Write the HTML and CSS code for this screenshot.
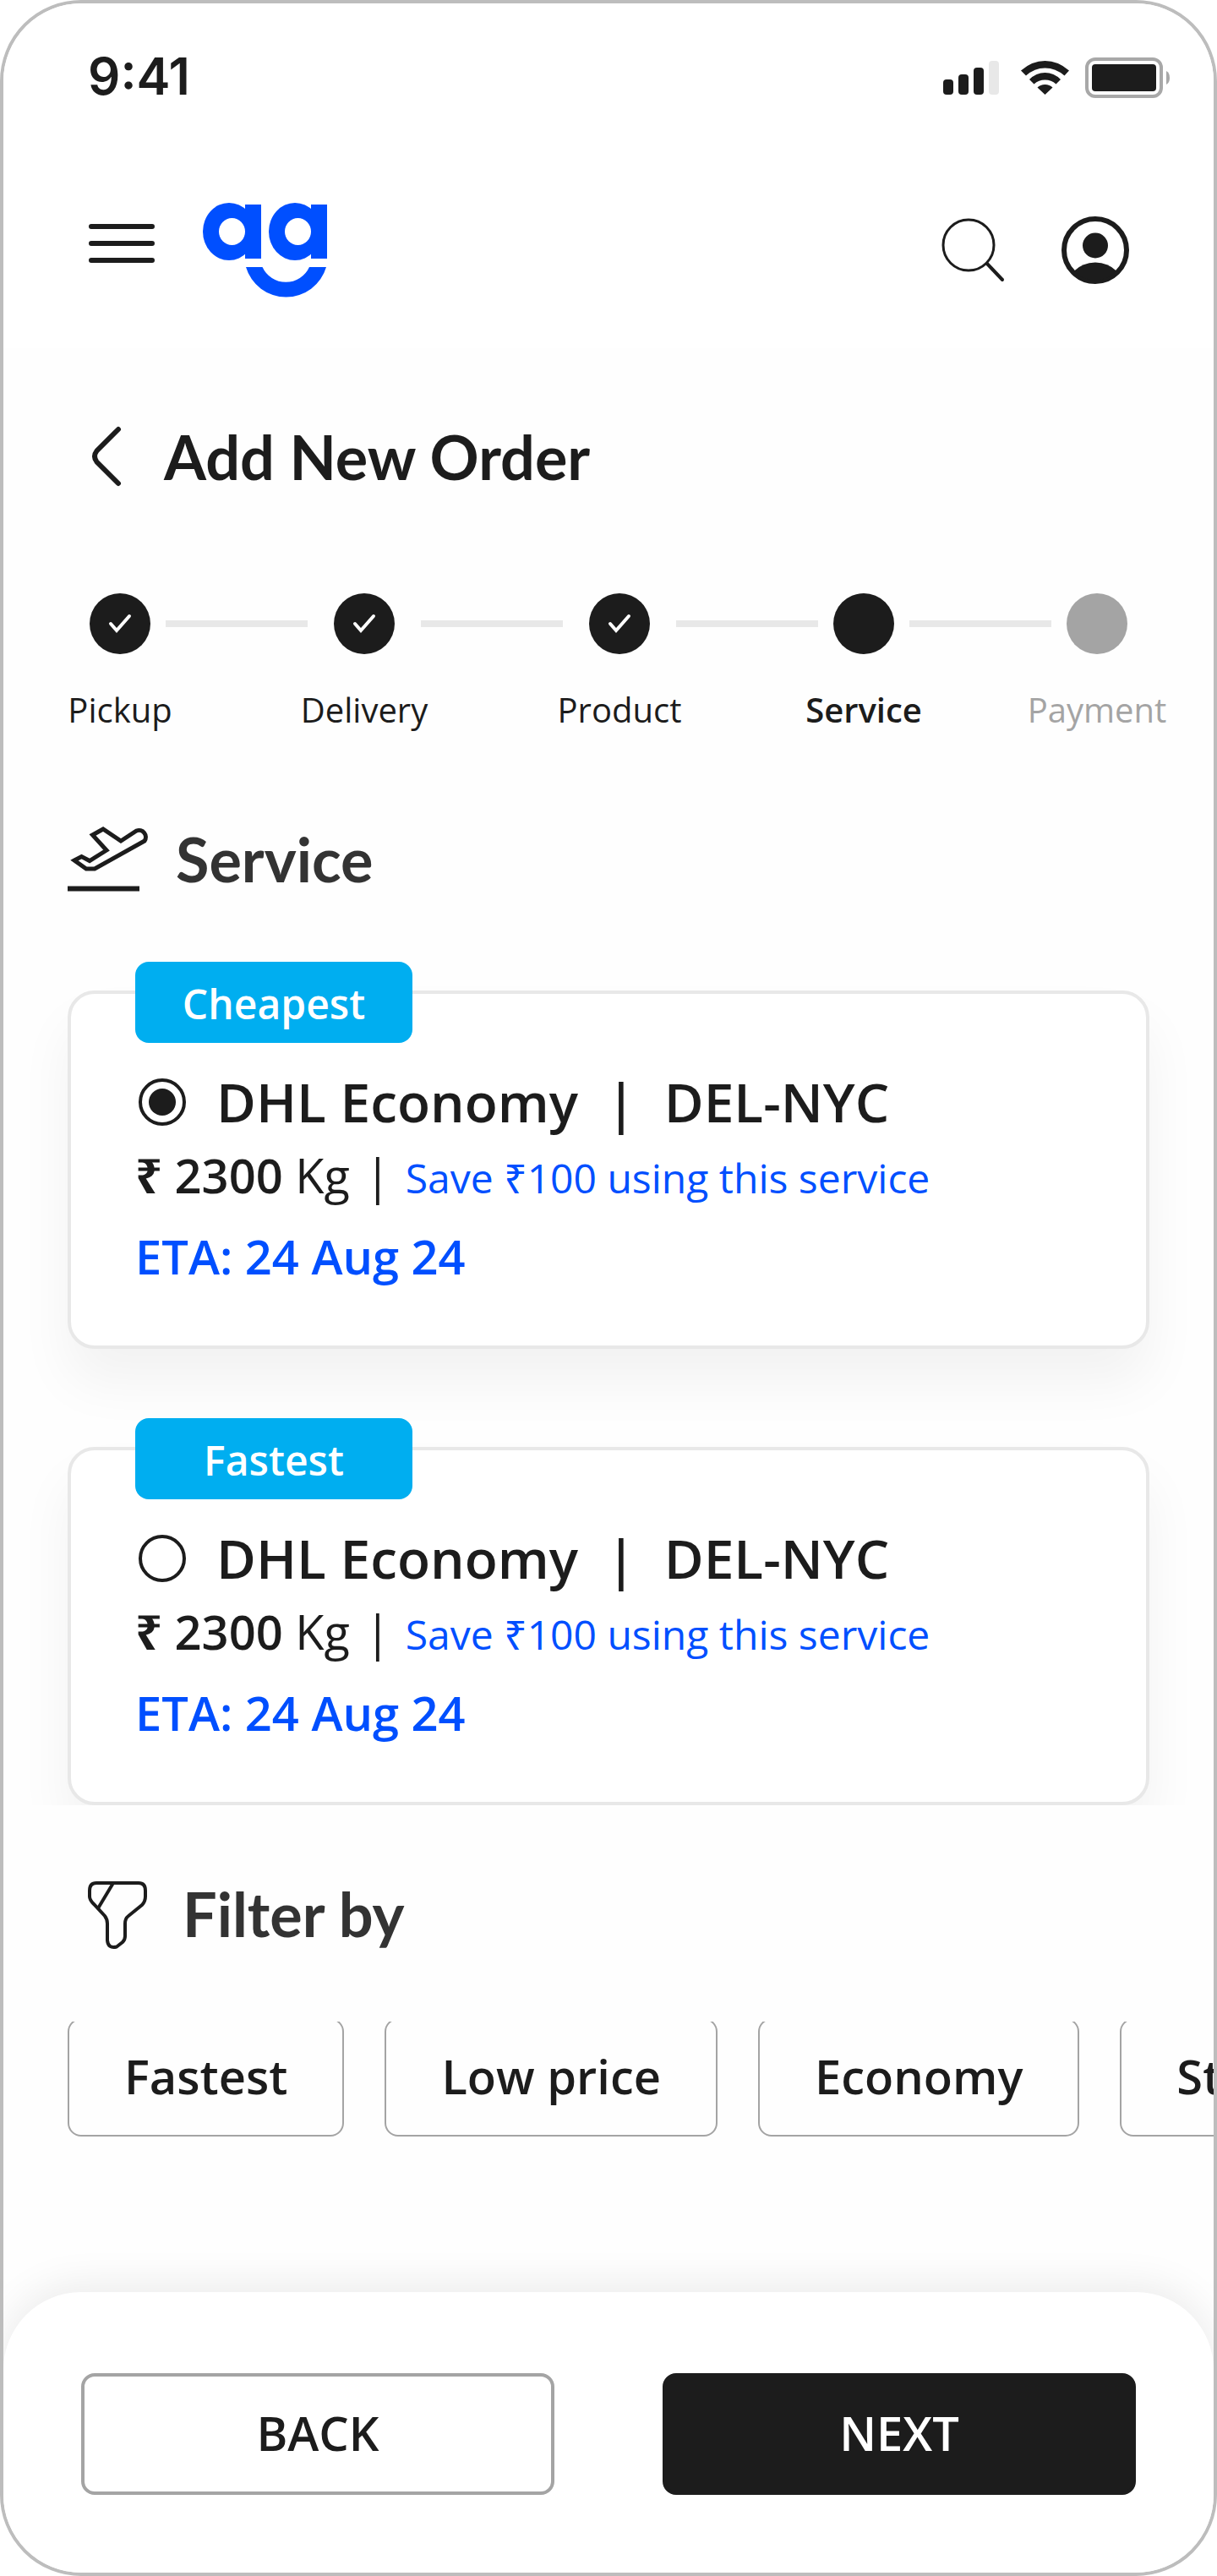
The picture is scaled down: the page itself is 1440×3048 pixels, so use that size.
FILE: index.html
```html
<!DOCTYPE html>
<html lang="en">
<head>
<meta charset="utf-8">
<meta name="viewport" content="width=device-width, initial-scale=1">
<title>Add New Order</title>
<link rel="stylesheet" href="styles.css">
</head>
<body>
<div class="screen">
  <div class="status-bar">
    <span class="time">9:41</span>
    <svg class="status-icons" viewBox="0 0 270 48" role="img" aria-label="Signal, Wi-Fi and battery">
      <g fill="#1c1c1c">
        <rect x="2" y="26" width="12" height="18" rx="4"/>
        <rect x="20" y="20" width="12" height="24" rx="4"/>
        <rect x="38" y="12" width="12" height="32" rx="4"/>
        <rect x="56" y="4" width="12" height="40" rx="4" fill="#e8e8e8"/>
        <path d="M94 15.500Q107 4 122.500 4T151 15.500L145.500 21.500Q135 12.500 122.500 12.500T100 21.500Z"/>
        <path d="M104 26Q112 18 122.500 18T141 26L135.500 31.500Q130 26.500 122.500 26.500T109.500 31.500Z"/>
        <path d="M113.500 35.500Q117 32 122.500 32T131.500 35.500L122.500 44Z"/>
        <rect x="178" y="8" width="76" height="32" rx="4"/>
      </g>
      <rect x="172" y="2" width="88" height="44" rx="10" fill="none" stroke="#a8a8a8" stroke-width="4"/>
      <path d="M266 16q4 2 4 8t-4 8z" fill="#a8a8a8"/>
    </svg>
  </div>

  <header class="app-header">
    <button class="icon-button" type="button" aria-label="Menu">
      <svg width="80" height="80" viewBox="0 0 80 80" fill="none" stroke="#1c1c1c" stroke-width="6" stroke-linecap="round">
        <path d="M4 12H76M4 32H76M4 52H76"/>
      </svg>
    </button>
    <a class="logo" href="#" aria-label="Home">
      <svg width="147" height="112" viewBox="0 0 147 112" fill="#004fff">
        <ellipse cx="31" cy="34" rx="31" ry="34"/>
        <rect x="50" y="2" width="19" height="64"/>
        <ellipse cx="34.500" cy="34" rx="15.500" ry="16" fill="#fff"/>
        <ellipse cx="109" cy="34" rx="31" ry="34"/>
        <rect x="128" y="2" width="19" height="64"/>
        <ellipse cx="112.500" cy="34" rx="15.500" ry="16" fill="#fff"/>
        <path d="M51 76H70.500A30.500 30.500 0 0 0 126 76H146A49.500 49.500 0 0 1 51 76Z"/>
      </svg>
    </a>
    <div class="header-actions">
      <button class="icon-button" type="button" aria-label="Search">
        <svg width="80" height="80" viewBox="0 0 80 80" fill="none" stroke="#1c1c1c" stroke-width="4" stroke-linecap="round">
          <circle cx="36" cy="34" r="30" stroke-width="3"/>
          <path d="M58 56L76 75"/>
        </svg>
      </button>
      <button class="icon-button" type="button" aria-label="Account">
        <svg width="80" height="80" viewBox="0 0 80 80" fill="#1c1c1c">
          <circle cx="40" cy="40" r="37" fill="none" stroke="#1c1c1c" stroke-width="6"/>
          <circle cx="40" cy="34.500" r="15"/>
          <path d="M14.500 65Q25 54.500 40 54.500T65.500 65A36 36 0 0 1 14.500 65Z"/>
        </svg>
      </button>
    </div>
  </header>

  <main class="content">
    <div class="page-title">
      <button class="icon-button" type="button" aria-label="Go back">
        <svg width="48" height="80" viewBox="0 0 48 80" fill="none" stroke="#1c1c1c" stroke-width="6" stroke-linecap="round">
          <path d="M36 8L10.500 33.500Q5.500 40 10.500 46.500L36 72"/>
        </svg>
      </button>
      <h1>Add New Order</h1>
    </div>

    <ol class="stepper">
      <li class="step">
        <span class="dot"><svg width="28" height="28" viewBox="0 0 28 28"><path d="M3 14L10 22L25 5"/></svg></span>
        <span class="step-label">Pickup</span>
      </li>
      <li class="connector" aria-hidden="true"></li>
      <li class="step spaced">
        <span class="dot"><svg width="28" height="28" viewBox="0 0 28 28"><path d="M3 14L10 22L25 5"/></svg></span>
        <span class="step-label">Delivery</span>
      </li>
      <li class="connector" aria-hidden="true"></li>
      <li class="step spaced">
        <span class="dot"><svg width="28" height="28" viewBox="0 0 28 28"><path d="M3 14L10 22L25 5"/></svg></span>
        <span class="step-label">Product</span>
      </li>
      <li class="connector" aria-hidden="true"></li>
      <li class="step current" aria-current="step">
        <span class="dot"></span>
        <span class="step-label">Service</span>
      </li>
      <li class="connector" aria-hidden="true"></li>
      <li class="step upcoming">
        <span class="dot"></span>
        <span class="step-label">Payment</span>
      </li>
    </ol>

    <div class="section-heading">
      <svg width="96" height="88" viewBox="0 0 96 88" fill="none" stroke="#1c1c1c" stroke-width="5">
        <path d="M8 46L16.500 41.500L26 46.500L46 34L29.500 16L42 9L63 23L81.500 11A8 8 0 0 1 91 23L32 56H22Z"/>
        <path d="M0 79.500H85" stroke-width="6"/>
      </svg>
      <h2>Service</h2>
    </div>

    <div class="service-list" role="radiogroup" aria-label="Service">
      <article class="service-card">
        <span class="badge">Cheapest</span>
        <div class="service-name">
          <input type="radio" name="service" id="service-cheapest" checked>
          <label for="service-cheapest">DHL Economy&nbsp; |&nbsp; DEL-NYC</label>
        </div>
        <p class="price"><strong><span class="currency">₹</span> 2300</strong> Kg <span class="divider">|</span> <span class="saving">Save ₹100 using this service</span></p>
        <p class="eta">ETA: 24 Aug 24</p>
      </article>
      <article class="service-card">
        <span class="badge">Fastest</span>
        <div class="service-name">
          <input type="radio" name="service" id="service-fastest">
          <label for="service-fastest">DHL Economy&nbsp; |&nbsp; DEL-NYC</label>
        </div>
        <p class="price"><strong><span class="currency">₹</span> 2300</strong> Kg <span class="divider">|</span> <span class="saving">Save ₹100 using this service</span></p>
        <p class="eta">ETA: 24 Aug 24</p>
      </article>
    </div>

    <div class="section-heading filter-heading">
      <svg width="72" height="88" viewBox="0 0 72 88" fill="none" stroke="#1c1c1c" stroke-width="4">
        <path d="M10 8H60Q68 8 68 17V24Q68 30 64 34L48 47Q44 50 44 56V71Q44 75 41 78L34 83.500Q24 86 23 76V56Q23 51 20 47L7 33Q2 28 2 24V17Q2 8 10 8Z"/>
        <path d="M30 8L12 38"/>
      </svg>
      <h2>Filter by</h2>
    </div>

    <div class="filters">
      <div class="filter-row">
        <button class="chip" type="button">Fastest</button>
        <button class="chip" type="button">Low price</button>
        <button class="chip" type="button">Economy</button>
        <button class="chip" type="button">Standard</button>
      </div>
    </div>
  </main>

  <footer class="actions">
    <button class="button" type="button">BACK</button>
    <button class="button primary" type="button">NEXT</button>
  </footer>
</div>
</body>
</html>
```
FILE: styles.css
```css
* {
  box-sizing: border-box;
}

body {
  margin: 0;
  background: #fff;
  color: #1c1c1c;
  font-family: "Open Sans", "Noto Sans", sans-serif;
}

h1, h2, p, ol {
  margin: 0;
  padding: 0;
}

button {
  font-family: inherit;
  color: inherit;
  cursor: pointer;
}

svg {
  display: block;
}

.screen {
  display: flex;
  flex-direction: column;
  min-height: 100vh;
  overflow: hidden;
  border: 4px solid #bdbdbd;
  border-radius: 96px;
  background: #fefefe;
}

/* Status bar */

.status-bar {
  display: flex;
  align-items: center;
  justify-content: space-between;
  padding: 50px 52px 0 100px;
  background: #fff;
}

.time {
  padding-bottom: 4px;
  font-family: Inter, sans-serif;
  font-size: 60px;
  font-weight: 600;
  line-height: 72px;
}

.status-icons {
  width: 270px;
  height: 48px;
}

/* Header */

.app-header {
  display: flex;
  align-items: center;
  padding: 110px 100px 60px;
  background: #fff;
}

.icon-button {
  padding: 0;
  border: 0;
  background: none;
}

.logo {
  margin-left: 56px;
}

.header-actions {
  display: flex;
  gap: 66px;
  margin-left: auto;
}

/* Page title */

.page-title {
  display: flex;
  align-items: center;
  gap: 42px;
  padding: 84px 100px 0;
}

h1, h2 {
  font-family: Lato, sans-serif;
  font-size: 72px;
  font-weight: 700;
  line-height: 88px;
}

h2 {
  color: #333;
}

/* Stepper */

.stepper {
  display: flex;
  gap: 18px;
  margin-top: 118px;
  padding: 0 102px;
  list-style: none;
}

.step {
  display: flex;
  flex-direction: column;
  align-items: center;
  gap: 38px;
  width: 72px;
}

.step.spaced {
  margin: 0 13px;
}

.dot {
  display: flex;
  align-items: center;
  justify-content: center;
  width: 72px;
  height: 72px;
  border-radius: 50%;
  background: #1c1c1c;
}

.dot path {
  fill: none;
  stroke: #fff;
  stroke-width: 4;
  stroke-linecap: round;
}

.step-label {
  font-size: 40px;
  line-height: 56px;
  white-space: nowrap;
}

.current .step-label {
  font-weight: 600;
}

.upcoming .dot {
  background: #a4a4a4;
}

.upcoming .step-label {
  color: #a4a4a4;
}

.connector {
  flex: 1;
  height: 8px;
  margin-top: 32px;
  background: #e8e8e8;
}

/* Section headings */

.section-heading {
  display: flex;
  align-items: center;
  gap: 32px;
  margin-top: 104px;
  padding: 0 76px;
}

.filter-heading {
  gap: 40px;
  margin-top: 84px;
  padding: 0 100px;
}

/* Services */

.service-list {
  display: flex;
  flex-direction: column;
  gap: 116px;
  margin-top: 76px;
  padding: 36px 76px 0;
  overflow: hidden;
}

.service-card {
  position: relative;
  padding: 84px 76px 68px;
  border: 4px solid #e8e8e8;
  border-radius: 32px;
  background: #fff;
  box-shadow: 0 40px 64px rgba(0, 0, 0, 0.05);
}

.badge {
  position: absolute;
  top: -38px;
  left: 76px;
  width: 328px;
  padding-top: 4px;
  border-radius: 16px;
  background: #00aef0;
  color: #fff;
  font-size: 48px;
  font-weight: 600;
  line-height: 92px;
  text-align: center;
}

.service-name {
  display: flex;
  align-items: center;
  gap: 36px;
  font-size: 64px;
  font-weight: 600;
  line-height: 88px;
}

.service-name input {
  flex: none;
  width: 56px;
  height: 56px;
  margin: 0 0 0 4px;
  border: 4px solid #1c1c1c;
  border-radius: 50%;
  appearance: none;
}

.service-name input:checked {
  padding: 8px;
  background: #1c1c1c content-box;
}

.price {
  margin-top: 4px;
  font-size: 56px;
  line-height: 76px;
}

.price strong {
  font-weight: 600;
}

.price .currency {
  font-weight: 700;
}

.divider {
  margin: 0 3px;
}

.saving {
  color: #004fff;
  font-size: 48px;
  line-height: 48px;
}

.eta {
  margin-top: 20px;
  color: #004fff;
  font-size: 56px;
  font-weight: 600;
  line-height: 76px;
}

/* Filters */

.filters {
  margin-top: 84px;
  overflow: hidden;
}

.filter-row {
  display: flex;
  gap: 48px;
  margin-top: -4px;
  padding: 0 76px;
}

.chip {
  flex: none;
  padding: 28px 65px 32px;
  border: 2px solid #a4a4a4;
  border-radius: 16px;
  background: none;
  font-size: 56px;
  font-weight: 600;
  line-height: 76px;
}

/* Bottom actions */

.actions {
  display: flex;
  gap: 128px;
  margin-top: auto;
  padding: 96px 92px 92px;
  border-radius: 92px 92px 0 0;
  background: #fff;
  box-shadow: 0 -8px 48px rgba(0, 0, 0, 0.08);
}

.button {
  flex: 1;
  padding: 28px 32px 32px;
  border: 4px solid #a4a4a4;
  border-radius: 16px;
  background: #fff;
  font-size: 56px;
  font-weight: 600;
  line-height: 76px;
}

.button.primary {
  border-color: #1c1c1c;
  background: #1c1c1c;
  color: #fff;
}
```
